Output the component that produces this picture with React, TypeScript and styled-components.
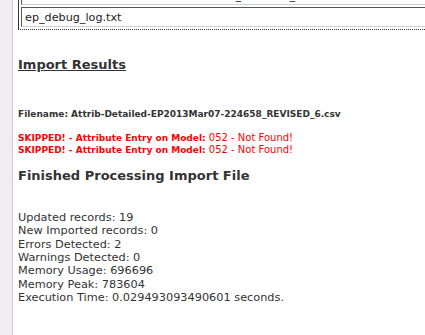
import React from "react";
import styled, { createGlobalStyle } from "styled-components";

const GlobalStyle = createGlobalStyle`
  html, body {
    margin: 0;
    padding: 0;
    background: #fff;
    overflow: hidden;
  }
  body {
    font-family: "DejaVu Sans", Verdana, sans-serif;
    color: #333;
  }
`;

const Page = styled.div`
  display: flex;
  width: 425px;
  height: 335px;
  overflow: hidden;
`;

const Strip = styled.div`
  flex: 0 0 12px;
  border-right: 1px solid #c5cde6;
  background-color: #f3eef6;
  background-image:
    linear-gradient(45deg, #e6f0e6 25%, transparent 25%, transparent 75%, #e6f0e6 75%),
    linear-gradient(45deg, #fbe6ee 25%, transparent 25%, transparent 75%, #fbe6ee 75%);
  background-size: 4px 4px;
  background-position: 0 0, 2px 2px;
`;

const Content = styled.main`
  flex: 1;
  min-width: 0;
  padding-left: 5px;
`;

const Fieldset = styled.div`
  display: flex;
  flex-direction: column;
  gap: 2px;
  width: 460px;
  margin-top: -17px;
  padding: 2px;
  border-left: 1px solid #333;
  border-bottom: 1px dotted #333;
`;

const TextInput = styled.div`
  height: 18px;
  padding: 0 3px;
  display: flex;
  align-items: center;
  font-family: "DejaVu Sans", Verdana, sans-serif;
  font-size: 11.2px;
  color: #222;
  border: 1px solid;
  border-color: #555 #ccd1cf #ccd1cf #555;
  white-space: nowrap;
`;

const SectionTitle = styled.h2<{ $underline?: boolean }>`
  margin: 0;
  font-size: 13px;
  font-weight: bold;
  line-height: 17px;
  color: #333;
  text-decoration: ${(p) => (p.$underline ? "underline" : "none")};
`;

const FileName = styled.p`
  margin: 0;
  font-size: 9px;
  font-weight: bold;
  line-height: 12px;
  white-space: nowrap;
`;

const Messages = styled.div`
  display: flex;
  flex-direction: column;
`;

const Skipped = styled.div`
  font-size: 10px;
  line-height: 11px;
  color: #ff0000;
  white-space: nowrap;
  b {
    font-size: 9px;
    font-weight: bold;
  }
`;

const Stats = styled.div`
  font-size: 11.3px;
  line-height: 13.33px;
  color: #333;
  white-space: nowrap;
`;

const Block = styled.div<{ $top: number }>`
  margin-top: ${(p) => p.$top}px;
`;

const stats = [
  "Updated records: 19",
  "New Imported records: 0",
  "Errors Detected: 2",
  "Warnings Detected: 0",
  "Memory Usage: 696696",
  "Memory Peak: 783604",
  "Execution Time: 0.029493093490601 seconds.",
];

export default function App() {
  return (
    <>
      <GlobalStyle />
      <Page>
        <Strip />
        <Content>
          <Fieldset>
            <TextInput>Attrib-Detailed-EP2013Mar07-224658_REVISED_6.csv</TextInput>
            <TextInput>ep_debug_log.txt</TextInput>
          </Fieldset>

          <Block $top={26}>
            <SectionTitle $underline>Import Results</SectionTitle>
          </Block>

          <Block $top={35}>
            <FileName>Filename: Attrib-Detailed-EP2013Mar07-224658_REVISED_6.csv</FileName>
          </Block>

          <Block $top={12}>
            <Messages>
              <Skipped><b>SKIPPED! - Attribute Entry on Model:</b> 052 - Not Found!</Skipped>
              <Skipped><b>SKIPPED! - Attribute Entry on Model:</b> 052 - Not Found!</Skipped>
            </Messages>
          </Block>

          <Block $top={11}>
            <SectionTitle>Finished Processing Import File</SectionTitle>
          </Block>

          <Block $top={27}>
            <Stats>
              {stats.map((line) => (
                <div key={line}>{line}</div>
              ))}
            </Stats>
          </Block>
        </Content>
      </Page>
    </>
  );
}
